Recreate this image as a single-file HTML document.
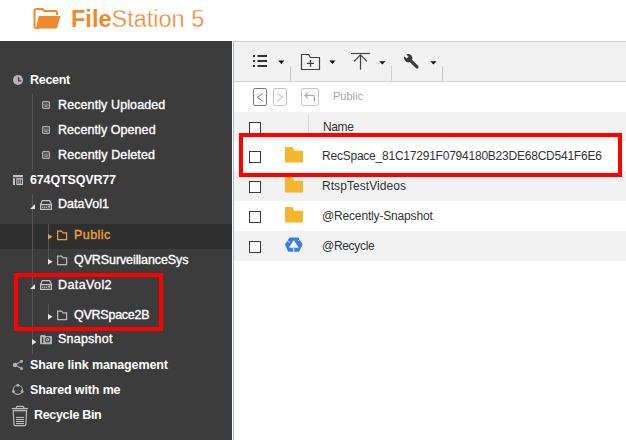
<!DOCTYPE html>
<html><head><meta charset="utf-8">
<style>
*{margin:0;padding:0;box-sizing:border-box}
html,body{width:626px;height:440px;overflow:hidden;background:#fff;font-family:"Liberation Sans",sans-serif}
.a{position:absolute}
#hdr{left:0;top:0;width:626px;height:41px;background:#fff}
#logo-t{left:71px;top:5px;font-size:23.5px;line-height:28px;color:#ee8a2c;white-space:nowrap}
#side{left:0;top:41px;width:232px;height:399px;background:#3c3c3c}
.st{position:absolute;font-size:12.5px;line-height:12px;font-weight:bold;color:#fff;white-space:nowrap}
.md{font-weight:normal;-webkit-text-stroke:0.35px currentColor}
.vl{position:absolute;width:1px;background:#555}
#content{left:233px;top:41px;width:393px;height:399px;background:#fff;border-left:1px solid #adbac6}
#tb{left:234px;top:41px;width:392px;height:41px;background:#f2f2f2;border-top:1px solid #d0d0d0;border-bottom:1px solid #d6d6d6}
#bc{left:234px;top:82px;width:392px;height:31px;background:#fff;border-bottom:1px solid #e2e2e2}
.row{position:absolute;left:234px;width:392px;height:30px}
.ct{position:absolute;font-size:12px;line-height:12px;color:#333;white-space:nowrap}
.cb{position:absolute;left:249px;width:12px;height:12px;border:1.5px solid #3a3a3a;background:#fff}
.red{position:absolute;border:4px solid #fe0000}
</style></head><body>
<div id="hdr" class="a"></div>
<svg class="a" style="left:32px;top:7px" width="30" height="23" viewBox="0 0 30 23">
  <path d="M7 21 H4 Q2.5 21 2.5 19.5 V4 Q2.5 2 4.5 2 H10.5 L12.5 4 H23.5 Q25 4 25 5.5 V8" fill="none" stroke="#ee8a2c" stroke-width="2"/>
  <path d="M6.5 9 H28.5 L25.3 20.3 Q24.8 21.5 23.5 21.5 H4 Z" fill="#ee8a2c"/>
</svg>
<div id="logo-t" class="a"><b>File</b><span style="-webkit-text-stroke:0.35px #fff;color:#eb8834">Station 5</span></div>

<div id="side" class="a"></div>
<!-- public highlight -->
<div class="a" style="left:0;top:224px;width:232px;height:25px;background:#2f2f2f"></div>
<!-- tree lines -->
<div class="vl" style="left:32px;top:94px;height:76px"></div>
<div class="vl" style="left:32px;top:194px;height:160px"></div>
<div class="vl" style="left:48px;top:224px;height:41px"></div>
<div class="vl" style="left:48px;top:304px;height:16px"></div>

<!-- icons sidebar -->
<svg class="a" style="left:12px;top:75px" width="12" height="11" viewBox="0 0 12 11"><circle cx="6" cy="5" r="5" fill="#b4b4b4"/><path d="M6.6 2.3V5.9H9.2" fill="none" stroke="#3c3c3c" stroke-width="1.4"/></svg>
<div class="st" style="left:30px;top:74px;letter-spacing:-0.3px">Recent</div>

<svg class="a" style="left:42px;top:101px" width="8" height="8" viewBox="0 0 8 8"><rect x="0.6" y="0.6" width="6.8" height="6.8" rx="1" fill="none" stroke="#b0b0b0" stroke-width="1.2"/><rect x="1.5" y="2.5" width="5" height="3" fill="#777"/><rect x="2.5" y="5" width="3" height="0.8" fill="#aaa"/></svg>
<div class="st md" style="left:58px;top:99px;letter-spacing:0.101px">Recently Uploaded</div>
<svg class="a" style="left:42px;top:126px" width="8" height="8" viewBox="0 0 8 8"><rect x="0.6" y="0.6" width="6.8" height="6.8" rx="1" fill="none" stroke="#b0b0b0" stroke-width="1.2"/><rect x="1.5" y="2.5" width="5" height="3" fill="#777"/><rect x="2.5" y="5" width="3" height="0.8" fill="#aaa"/></svg>
<div class="st md" style="left:58px;top:124px;letter-spacing:0.071px">Recently Opened</div>
<svg class="a" style="left:42px;top:151px" width="8" height="8" viewBox="0 0 8 8"><rect x="0.6" y="0.6" width="6.8" height="6.8" rx="1" fill="none" stroke="#b0b0b0" stroke-width="1.2"/><rect x="1.5" y="2.5" width="5" height="3" fill="#777"/><rect x="2.5" y="5" width="3" height="0.8" fill="#aaa"/></svg>
<div class="st md" style="left:58px;top:149px;letter-spacing:0.119px">Recently Deleted</div>

<svg class="a" style="left:13px;top:175px" width="10" height="10" viewBox="0 0 10 10"><rect x="0" y="0" width="10" height="2.2" fill="#c4c4c4"/><rect x="0" y="3.2" width="2" height="6.8" fill="#c4c4c4"/><rect x="3.3" y="3.2" width="6.7" height="6.8" fill="#c4c4c4"/><rect x="4.4" y="4.4" width="1" height="4.4" fill="#3c3c3c"/><rect x="6.3" y="4.4" width="1" height="4.4" fill="#3c3c3c"/><rect x="8.1" y="4.4" width="0.9" height="4.4" fill="#3c3c3c"/></svg>
<div class="st" style="left:30px;top:174px;letter-spacing:-0.15px">674QTSQVR77</div>

<svg class="a" style="left:30px;top:204px" width="5" height="5" viewBox="0 0 5 5"><path d="M5 0V5H0Z" fill="#ddd"/></svg>
<svg class="a" style="left:40px;top:200px" width="12" height="10" viewBox="0 0 12 10"><path d="M2.3 0.6H9.7L11.4 4.5V9.4H0.6V4.5Z M0.6 4.6H11.4" fill="none" stroke="#c8c8c8" stroke-width="1.2"/><rect x="2" y="6.5" width="1.3" height="1.3" fill="#ccc"/><rect x="4" y="6.5" width="1.3" height="1.3" fill="#ccc"/><rect x="6" y="6.5" width="1.3" height="1.3" fill="#ccc"/><rect x="8.2" y="5.8" width="1.8" height="1.8" fill="#ccc"/></svg>
<div class="st md" style="left:58px;top:198px;letter-spacing:0.029px">DataVol1</div>

<svg class="a" style="left:47.5px;top:234px" width="5" height="6" viewBox="0 0 5 6"><path d="M0 0L4.6 2.7L0 5.4Z" fill="#e8a13a"/></svg>
<svg class="a" style="left:57px;top:230px" width="11" height="11" viewBox="0 0 11 11"><path d="M0.6 9.6V1.1H4.6L6 2.9H9.6V9.6Z" fill="none" stroke="#e8a13a" stroke-width="1.2"/></svg>
<div class="st md" style="left:74px;top:229px;color:#eba43a;letter-spacing:0.44px">Public</div>

<svg class="a" style="left:47.5px;top:259px" width="5" height="6" viewBox="0 0 5 6"><path d="M0 0L4.6 2.8L0 5.6Z" fill="#eee"/></svg>
<svg class="a" style="left:57px;top:255px" width="11" height="11" viewBox="0 0 11 11"><path d="M0.6 9.6V1.1H4.6L6 2.9H9.6V9.6Z" fill="none" stroke="#bbb" stroke-width="1.2"/></svg>
<div class="st md" style="left:74px;top:254px;letter-spacing:-0.095px">QVRSurveillanceSys</div>

<svg class="a" style="left:30px;top:284px" width="5" height="5" viewBox="0 0 5 5"><path d="M5 0V5H0Z" fill="#ddd"/></svg>
<svg class="a" style="left:40px;top:280px" width="12" height="10" viewBox="0 0 12 10"><path d="M2.3 0.6H9.7L11.4 4.5V9.4H0.6V4.5Z M0.6 4.6H11.4" fill="none" stroke="#c8c8c8" stroke-width="1.2"/><rect x="2" y="6.5" width="1.3" height="1.3" fill="#ccc"/><rect x="4" y="6.5" width="1.3" height="1.3" fill="#ccc"/><rect x="6" y="6.5" width="1.3" height="1.3" fill="#ccc"/><rect x="8.2" y="5.8" width="1.8" height="1.8" fill="#ccc"/></svg>
<div class="st md" style="left:58px;top:279px;letter-spacing:0.401px">DataVol2</div>

<svg class="a" style="left:47.5px;top:314px" width="5" height="6" viewBox="0 0 5 6"><path d="M0 0L4.6 2.8L0 5.6Z" fill="#eee"/></svg>
<svg class="a" style="left:57px;top:310px" width="11" height="11" viewBox="0 0 11 11"><path d="M0.6 9.6V1.1H4.6L6 2.9H9.6V9.6Z" fill="none" stroke="#bbb" stroke-width="1.2"/></svg>
<div class="st md" style="left:74px;top:309px;letter-spacing:-0.244px">QVRSpace2B</div>

<svg class="a" style="left:31.5px;top:339px" width="5" height="6" viewBox="0 0 5 6"><path d="M0 0L4.5 3L0 6Z" fill="#e6e6e6"/></svg>
<svg class="a" style="left:40px;top:335px" width="12" height="10" viewBox="0 0 12 10"><rect x="0" y="1" width="12" height="8.2" rx="0.8" fill="#b4b4b4"/><rect x="0.6" y="0" width="4.6" height="2" rx="0.6" fill="#b4b4b4"/><rect x="2" y="2.2" width="1.2" height="5.8" fill="#3c3c3c"/><circle cx="7.6" cy="4.7" r="2.7" fill="#3c3c3c"/><circle cx="7.6" cy="4.7" r="1.8" fill="#b4b4b4"/><circle cx="7.6" cy="4.7" r="0.6" fill="#555"/></svg>
<div class="st md" style="left:58px;top:333px;letter-spacing:0.229px">Snapshot</div>

<svg class="a" style="left:10px;top:358px" width="16" height="14" viewBox="0 0 16 14"><path d="M5 7L11.5 3.3M5 7L11.5 10.5" stroke="#aaa" stroke-width="1.1"/><circle cx="5" cy="7" r="2.2" fill="#b0b0b0"/><circle cx="11.5" cy="3.3" r="1.5" fill="#b0b0b0"/><circle cx="11.5" cy="10.5" r="1.5" fill="#b0b0b0"/></svg>
<div class="st" style="left:30px;top:359px;letter-spacing:-0.12px">Share link management</div>

<svg class="a" style="left:10px;top:382px" width="16" height="16" viewBox="0 0 16 16"><circle cx="7.8" cy="7.8" r="4.6" fill="none" stroke="#aaa" stroke-width="1.1"/><circle cx="7.8" cy="3.3" r="1.5" fill="#b0b0b0"/><circle cx="3.5" cy="9.5" r="1.5" fill="#b0b0b0"/><circle cx="12.1" cy="9.5" r="1.5" fill="#b0b0b0"/></svg>
<div class="st" style="left:30px;top:384px;letter-spacing:-0.14px">Shared with me</div>

<svg class="a" style="left:11px;top:405px" width="18" height="22" viewBox="0 0 18 22"><path d="M0.8 3.5H17" stroke="#bbb" stroke-width="1.2"/><path d="M5.3 3.2V2.4Q5.3 1.3 6.4 1.3H11.7Q12.8 1.3 12.8 2.4V3.2" fill="none" stroke="#bbb" stroke-width="1.2"/><path d="M2.2 5.3H15.6L14.8 19.8Q14.7 20.7 13.8 20.7H4Q3.1 20.7 3 19.8Z" fill="none" stroke="#bbb" stroke-width="1.2"/><path d="M3.5 6.8H14.3" stroke="#888" stroke-width="0.7"/><path d="M5 12.4H13M5 14.5H13M5 16.5H13M5 18.6H13" stroke="#c4c4c4" stroke-width="1"/></svg>
<div class="st" style="left:34px;top:409px;letter-spacing:-0.32px">Recycle Bin</div>

<div class="red" style="left:14px;top:273px;width:149px;height:58px"></div>

<!-- content -->
<div id="content" class="a"></div>
<div id="tb" class="a"></div>
<div id="bc" class="a"></div>

<!-- toolbar icons -->
<svg class="a" style="left:252px;top:54px" width="16" height="14" viewBox="0 0 16 14"><rect x="1" y="1" width="2" height="2" fill="#333"/><rect x="1" y="6" width="2" height="2" fill="#333"/><rect x="1" y="11" width="2" height="2" fill="#333"/><rect x="5.5" y="1" width="9.5" height="2" fill="#333"/><rect x="5.5" y="6" width="9.5" height="2" fill="#333"/><rect x="5.5" y="11" width="9.5" height="2" fill="#333"/></svg>
<svg class="a" style="left:278px;top:60px" width="7" height="5" viewBox="0 0 7 5"><path d="M0.3 0.5H6.5L3.4 4Z" fill="#111"/></svg>
<div class="a" style="left:290px;top:66px;width:1px;height:15px;background:#d0d0d0"></div>
<svg class="a" style="left:300px;top:53px" width="21" height="18" viewBox="0 0 21 18"><path d="M1.5 16.5V1.5H8.6L10.4 4.5H19.5V16.5Z" fill="none" stroke="#404040" stroke-width="1.2"/><path d="M10.5 7V13.8M7 10.4H14" stroke="#404040" stroke-width="1.3"/></svg>
<svg class="a" style="left:329px;top:60px" width="7" height="5" viewBox="0 0 7 5"><path d="M0.3 0.5H6.5L3.4 4Z" fill="#111"/></svg>
<svg class="a" style="left:350px;top:52px" width="22" height="19" viewBox="0 0 22 19"><path d="M1 1.5H20.2" stroke="#444" stroke-width="1.2"/><path d="M10.5 2.5V17.8M4 9.4L10.5 2.8L16.9 9.4" fill="none" stroke="#444" stroke-width="1.2"/></svg>
<svg class="a" style="left:379px;top:61px" width="7" height="4" viewBox="0 0 7 4"><path d="M0.3 0.2H6.5L3.4 3.6Z" fill="#111"/></svg>
<div class="a" style="left:391px;top:66px;width:1px;height:15px;background:#d0d0d0"></div>
<svg class="a" style="left:402px;top:52px" width="20" height="20" viewBox="0 0 20 20"><g transform="translate(6.2,6.2) rotate(-45)"><circle cx="0" cy="0" r="4" fill="#3b3b3b"/><rect x="-1.4" y="-5" width="2.8" height="4.2" fill="#f2f2f2"/><rect x="-1.6" y="0" width="3.2" height="14" rx="1.6" fill="#3b3b3b"/></g></svg>
<svg class="a" style="left:430px;top:61px" width="7" height="4" viewBox="0 0 7 4"><path d="M0.3 0.2H6.5L3.4 3.6Z" fill="#111"/></svg>
<div class="a" style="left:442px;top:66px;width:1px;height:15px;background:#d0d0d0"></div>
<!-- breadcrumb -->
<div class="a" style="left:253px;top:88px;width:14px;height:18px;border:1px solid #7a7a7a;border-radius:2px"></div>
<svg class="a" style="left:253px;top:88px" width="14" height="18" viewBox="0 0 14 18"><path d="M9.8 5.6L4.2 9.35L9.8 13.1" fill="none" stroke="#777" stroke-width="1"/></svg>
<div class="a" style="left:273px;top:88px;width:14px;height:18px;border:1px solid #c4c4c4;border-radius:2px"></div>
<svg class="a" style="left:273px;top:88px" width="14" height="18" viewBox="0 0 14 18"><path d="M4.2 5.6L9.8 9.35L4.2 13.1" fill="none" stroke="#bbb" stroke-width="1"/></svg>
<div class="a" style="left:301px;top:88px;width:18px;height:18px;border:1px solid #c4c4c4;border-radius:2px"></div>
<svg class="a" style="left:301px;top:88px" width="18" height="18" viewBox="0 0 18 18"><path d="M7 4.4L4 7.4L7 10.4M4 7.4H11.6Q13.4 7.4 13.4 9.2V13.7" fill="none" stroke="#aaa" stroke-width="1.2"/></svg>
<div class="a" style="left:333px;top:91px;font-size:11px;line-height:11px;color:#a8a8a8">Public</div>

<div class="row" style="top:112px;height:29px;background:#f2f2f2"></div>
<div class="row" style="top:141px;background:#fff"></div>
<div class="row" style="top:171px;background:#f2f2f2"></div>
<div class="row" style="top:201px;background:#fff"></div>
<div class="row" style="top:231px;background:#f2f2f2"></div>

<div class="cb" style="top:122px"></div>
<div class="a" style="left:308px;top:114px;width:1px;height:25px;background:#dcdcdc"></div>
<div class="ct" style="left:323px;top:121px;letter-spacing:-0.4px">Name</div>

<div class="cb" style="top:151px"></div>
<svg class="a" style="left:285px;top:147px" width="18" height="16" viewBox="0 0 18 16"><path d="M0.3 0H7.7L9.3 3.8H17.7Q18 3.8 18 4.1V15.1Q18 15.4 17.7 15.4H0.3Q0 15.4 0 15.1V0.3Q0 0 0.3 0Z" fill="#f4b62f"/></svg>
<div class="ct" style="left:322px;top:150px;letter-spacing:-0.225px">RecSpace_81C17291F0794180B23DE68CD541F6E6</div>

<div class="cb" style="top:181px"></div>
<svg class="a" style="left:285px;top:177px" width="18" height="16" viewBox="0 0 18 16"><path d="M0.3 0H7.7L9.3 3.8H17.7Q18 3.8 18 4.1V15.1Q18 15.4 17.7 15.4H0.3Q0 15.4 0 15.1V0.3Q0 0 0.3 0Z" fill="#f4b62f"/></svg>
<div class="ct" style="left:322px;top:180px;letter-spacing:0.061px">RtspTestVideos</div>

<div class="cb" style="top:211px"></div>
<svg class="a" style="left:285px;top:207px" width="18" height="16" viewBox="0 0 18 16"><path d="M0.3 0H7.7L9.3 3.8H17.7Q18 3.8 18 4.1V15.1Q18 15.4 17.7 15.4H0.3Q0 15.4 0 15.1V0.3Q0 0 0.3 0Z" fill="#f4b62f"/></svg>
<div class="ct" style="left:322px;top:210px;letter-spacing:-0.164px">@Recently-Snapshot</div>

<div class="cb" style="top:241px"></div>
<svg class="a" style="left:282px;top:234px" width="24" height="22" viewBox="0 0 24 22"><path d="M8.2 4.6H15.8L19.3 10.6L16.2 16.6H7L4.2 10.6Z" fill="#3a7fe8" stroke="#3a7fe8" stroke-width="2.4" stroke-linejoin="round"/><path d="M11.8 6.4L16.3 13.6H7.3Z" fill="#fff" stroke="#fff" stroke-width="0.4" stroke-linejoin="round"/><path d="M11.7 14V18.5M16.3 7L18.3 4.6M7.6 8.4L5.3 6.6" stroke="#fff" stroke-width="0.9"/></svg>
<div class="ct" style="left:322px;top:240px;letter-spacing:-0.3px">@Recycle</div>

<div class="red" style="left:239px;top:133px;width:383px;height:44px"></div>
</body></html>
